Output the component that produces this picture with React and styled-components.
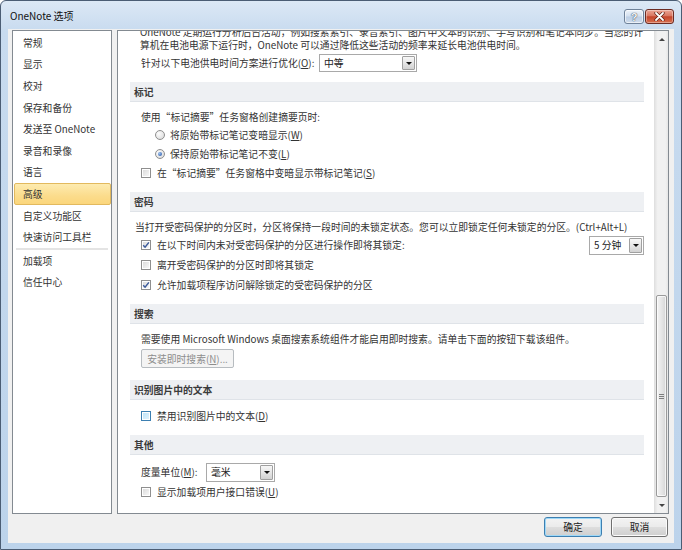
import React from "react";
import styled, { createGlobalStyle } from "styled-components";

const GlobalStyle = createGlobalStyle`
  html, body { margin: 0; padding: 0; background: #fff; }
  body {
    font-family: "Noto Sans CJK SC", "Liberation Sans", sans-serif;
    font-size: 9.8px;
    color: #333;
  }
  * { box-sizing: border-box; }
  u { text-decoration-thickness: 1px; text-underline-offset: 1px; }
`;

const navItems = [
  "常规",
  "显示",
  "校对",
  "保存和备份",
  "发送至 OneNote",
  "录音和录像",
  "语言",
  "高级",
  "自定义功能区",
  "快速访问工具栏",
  null,
  "加载项",
  "信任中心",
];

const Window = styled.div`
  width: 682px;
  height: 550px;
  display: flex;
  flex-direction: column;
  background: linear-gradient(#dce8f5, #c8dbef 30px, #bcd3eb);
  border: 1px solid #4b5d74;
  border-radius: 6px 6px 0 0;
  padding: 0 7px 6px;
`;

const TitleBar = styled.div`
  height: 28px;
  flex: none;
  display: flex;
  align-items: center;
  padding-left: 2px;
`;

const Title = styled.span`
  flex: 1;
  font-size: 10px;
  color: #111;
  margin-top: 1px;
`;

const Caption = styled.div`
  align-self: flex-start;
  margin-top: 8px;
  display: flex;
  gap: 1px;
`;

const HelpBtn = styled.span`
  width: 20px;
  height: 15px;
  border: 1px solid #6f8299;
  border-radius: 3px;
  background: linear-gradient(#eef3f9, #d3e0ef 48%, #bccee4 52%, #cfdcec);
  box-shadow: inset 0 0 0 1px rgba(255, 255, 255, 0.6);
  display: flex;
  align-items: center;
  justify-content: center;
  font-family: "Liberation Sans", sans-serif;
  font-size: 11px;
  font-weight: bold;
  color: #f4f6f9;
  text-shadow: 0 0 1px #3a4656, 0 0 1px #3a4656;
`;

const CloseBtn = styled.span`
  width: 29px;
  height: 15px;
  border: 1px solid #6c2b22;
  border-radius: 3px;
  background: linear-gradient(#eba595, #d87762 45%, #c4452c 52%, #d8704f);
  box-shadow: inset 0 0 0 1px rgba(255, 255, 255, 0.35);
  display: flex;
  align-items: center;
  justify-content: center;
`;

const Client = styled.div`
  flex: 1;
  display: flex;
  flex-direction: column;
  background: #f0f0f0;
  padding: 1px 5px 0 4px;
`;

const Body = styled.div`
  height: 484px;
  display: flex;
  gap: 5px;
`;

const Nav = styled.div`
  width: 100px;
  flex: none;
  background: #fff;
  border: 1px solid #838a91;
  padding: 1px 0 0 1px;
`;

const NavItem = styled.div`
  height: 21.6px;
  display: flex;
  align-items: center;
  padding-left: 8px;
  white-space: nowrap;
  color: #333;
  border: 1px solid ${(p) => (p.$active ? "#e2b95e" : "transparent")};
  border-radius: 2px;
  background: ${(p) =>
    p.$active ? "linear-gradient(#fdebb0, #fbdc8c 60%, #fbd67c)" : "transparent"};
`;

const NavSep = styled.div`
  height: 2px;
  margin: 0 3px 0 2px;
  background: #e4e4e4;
`;

const Panel = styled.div`
  flex: 1;
  display: flex;
  background: #fff;
  border: 1px solid #838a91;
`;

const Content = styled.div`
  flex: 1;
  overflow: hidden;
  padding: 0 10px 0 12px;
`;

const Scrolled = styled.div`
  margin-top: -5px;
`;

const ParaLine = styled.div`
  height: 12.5px;
  line-height: 12.5px;
  padding-left: 10px;
  white-space: nowrap;
`;

const Row = styled.div`
  height: ${(p) => p.$h || 19}px;
  margin-top: ${(p) => p.$mt || 0}px;
  padding-left: ${(p) => (p.$indent === undefined ? 11 : p.$indent)}px;
  display: flex;
  align-items: center;
  white-space: nowrap;
`;

const SectionHead = styled.div`
  height: 20px;
  margin-top: ${(p) => p.$gap}px;
  padding-left: 4px;
  display: flex;
  align-items: center;
  background: #eef0f3;
  border-bottom: 1px solid #dfe3e8;
  font-weight: bold;
  color: #3b3b3b;
`;

const SectionBody = styled.div`
  padding-top: ${(p) => p.$pt || 6}px;
`;

const FieldLabel = styled.span`
  width: ${(p) => p.$w}px;
  flex: none;
`;

const Box = styled.span`
  width: 10px;
  height: 10px;
  flex: none;
  display: flex;
  border: 1px solid ${(p) => (p.$hover ? "#3c7fb1" : "#8f8f8f")};
  box-shadow: inset 0 0 0 1px #fff;
  background: ${(p) =>
    p.$hover
      ? "linear-gradient(135deg, #b9e2f8, #e6f5fd)"
      : "linear-gradient(135deg, #d8d8d8, #fbfbfb)"};
`;

const Radio = styled.span`
  width: 10px;
  height: 10px;
  flex: none;
  border-radius: 50%;
  border: 1px solid #8f8f8f;
  background: radial-gradient(circle at 35% 35%, #fdfdfd, #d6d6d6);
  display: flex;
  align-items: center;
  justify-content: center;
  margin-right: 5px;
  &::after {
    content: "";
    width: 4px;
    height: 4px;
    border-radius: 50%;
    background: ${(p) =>
      p.$checked ? "radial-gradient(circle at 35% 35%, #9cc2f0, #1c4b9f)" : "transparent"};
  }
`;

const BoxLabel = styled.span`
  margin-left: 6px;
`;

const Combo = styled.div`
  width: ${(p) => p.$w}px;
  height: ${(p) => p.$h || 19}px;
  flex: none;
  margin-left: ${(p) => (p.$auto ? "auto" : "0")};
  display: flex;
  align-items: stretch;
  padding: 1px;
  background: #fff;
  border: 1px solid #a9a9a9;
`;

const ComboText = styled.span`
  flex: 1;
  display: flex;
  align-items: center;
  padding-left: 3px;
  color: #222;
`;

const ComboBtn = styled.span`
  width: 13px;
  flex: none;
  display: flex;
  align-items: center;
  justify-content: center;
  border: 1px solid #a0a0a0;
  border-radius: 1px;
  background: linear-gradient(#f7f7f7, #e6e6e6 50%, #d2d2d2);
  &::after {
    content: "";
    border-left: 3px solid transparent;
    border-right: 3px solid transparent;
    border-top: 3px solid #111;
  }
`;

const GhostButton = styled.span`
  width: 93px;
  height: 19px;
  display: flex;
  align-items: center;
  justify-content: center;
  border: 1px solid #b7bcc0;
  border-radius: 2px;
  background: #f4f4f4;
  color: #8d8d8d;
`;

const ScrollBar = styled.div`
  width: 14px;
  flex: none;
  display: flex;
  flex-direction: column;
  background: linear-gradient(to right, #e3e3e3, #f1f1f1 20%, #f1f1f1 80%, #e6e6e6);
  border-left: 1px solid #e0e0e0;
`;

const Arrow = styled.div`
  height: 16px;
  flex: none;
  display: flex;
  align-items: center;
  justify-content: center;
  &::after {
    content: "";
    border-left: 3px solid transparent;
    border-right: 3px solid transparent;
    ${(p) => (p.$down ? "border-top: 3px solid #444;" : "border-bottom: 3px solid #444;")}
  }
`;

const Track = styled.div`
  flex: 1;
  display: flex;
  flex-direction: column;
  justify-content: flex-end;
  padding: 0 1px 0 1px;
`;

const Thumb = styled.div`
  height: ${(p) => p.$h}px;
  border: 1px solid #9a9a9a;
  border-radius: 2px;
  background: linear-gradient(to right, #f4f4f4, #e6e6e6 50%, #d6d6d6);
  box-shadow: inset 0 0 0 1px rgba(255, 255, 255, 0.7);
  display: flex;
  flex-direction: column;
  align-items: center;
  justify-content: center;
  gap: 1px;
`;

const Grip = styled.span`
  width: 5px;
  height: 1px;
  background: #7d7d7d;
`;

const Footer = styled.div`
  flex: 1;
  display: flex;
  justify-content: flex-end;
  align-items: flex-start;
  gap: 9px;
  padding: 3px 1px 0 0;
`;

const DlgButton = styled.span`
  width: ${(p) => p.$w}px;
  height: 20px;
  display: flex;
  align-items: center;
  justify-content: center;
  border: 1px solid ${(p) => (p.$default ? "#3c7fb1" : "#707070")};
  border-radius: 3px;
  background: linear-gradient(#f3f3f3, #ebebeb 48%, #dddddd 52%, #cfcfcf);
  box-shadow: inset 0 0 0 1px ${(p) => (p.$default ? "#9fd8f7" : "#fbfbfb")};
  color: #222;
`;

const CheckBox = ({ checked, hover }) => (
  <Box $hover={hover}>
    {checked && (
      <svg width="8" height="8" viewBox="0 0 8 8">
        <path d="M1.2 4.2 L3.1 6.2 L6.9 1.4" fill="none" stroke="#3b5a9a" strokeWidth="1.5" />
      </svg>
    )}
  </Box>
);

const CheckRow = ({ checked, hover, h = 19, children, extra }) => (
  <Row $h={h}>
    <CheckBox checked={checked} hover={hover} />
    <BoxLabel>{children}</BoxLabel>
    {extra}
  </Row>
);

const Dropdown = ({ w, h, auto, children }) => (
  <Combo $w={w} $h={h} $auto={auto}>
    <ComboText>{children}</ComboText>
    <ComboBtn />
  </Combo>
);

const App = () => {
  return (
    <>
      <GlobalStyle />
      <Window>
        <TitleBar>
          <Title>OneNote 选项</Title>
          <Caption>
            <HelpBtn>?</HelpBtn>
            <CloseBtn>
              <svg width="11" height="9" viewBox="0 0 11 9">
                <path d="M2 1 L9 8 M9 1 L2 8" stroke="#5a1e14" strokeWidth="3.2" strokeLinecap="round" />
                <path d="M2 1 L9 8 M9 1 L2 8" stroke="#fff" strokeWidth="1.8" strokeLinecap="round" />
              </svg>
            </CloseBtn>
          </Caption>
        </TitleBar>
        <Client>
          <Body>
            <Nav>
              {navItems.map((item, i) =>
                item === null ? (
                  <NavSep key={i} />
                ) : (
                  <NavItem key={i} $active={item === "高级"}>
                    {item}
                  </NavItem>
                )
              )}
            </Nav>
            <Panel>
              <Content>
                <Scrolled>
                  <ParaLine>
                    OneNote 定期运行分析后台活动，例如搜索索引、录音索引、图片中文本的识别、手写识别和笔记本同步。当您的计
                  </ParaLine>
                  <ParaLine>
                    算机在电池电源下运行时，OneNote 可以通过降低这些活动的频率来延长电池供电时间。
                  </ParaLine>
                  <Row $h={20} $mt={2}>
                    <FieldLabel $w={178}>
                      针对以下电池供电时间方案进行优化(<u>O</u>):
                    </FieldLabel>
                    <Dropdown w={98} h={18}>中等</Dropdown>
                  </Row>

                  <SectionHead $gap={9}>标记</SectionHead>
                  <SectionBody>
                    <Row $h={17}>使用“标记摘要”任务窗格创建摘要页时:</Row>
                    <Row $indent={25}>
                      <Radio />
                      将原始带标记笔记变暗显示(<u>W</u>)
                    </Row>
                    <Row $indent={25}>
                      <Radio $checked />
                      保持原始带标记笔记不变(<u>L</u>)
                    </Row>
                    <CheckRow>
                      在“标记摘要”任务窗格中变暗显示带标记笔记(<u>S</u>)
                    </CheckRow>
                  </SectionBody>

                  <SectionHead $gap={10}>密码</SectionHead>
                  <SectionBody>
                    <Row $h={17} $indent={5}>
                      当打开受密码保护的分区时，分区将保持一段时间的未锁定状态。您可以立即锁定任何未锁定的分区。(Ctrl+Alt+L)
                    </Row>
                    <CheckRow
                      checked
                      h={20}
                      extra={<Dropdown w={55} h={19} auto>5 分钟</Dropdown>}
                    >
                      在以下时间内未对受密码保护的分区进行操作即将其锁定:
                    </CheckRow>
                    <CheckRow h={20}>离开受密码保护的分区时即将其锁定</CheckRow>
                    <CheckRow checked>允许加载项程序访问解除锁定的受密码保护的分区</CheckRow>
                  </SectionBody>

                  <SectionHead $gap={10}>搜索</SectionHead>
                  <SectionBody>
                    <Row $h={17}>
                      需要使用 Microsoft Windows 桌面搜索系统组件才能启用即时搜索。请单击下面的按钮下载该组件。
                    </Row>
                    <Row $h={19} $mt={2}>
                      <GhostButton>
                        安装即时搜索(<u>N</u>)...
                      </GhostButton>
                    </Row>
                  </SectionBody>

                  <SectionHead $gap={12}>识别图片中的文本</SectionHead>
                  <SectionBody>
                    <CheckRow hover h={20}>
                      禁用识别图片中的文本(<u>D</u>)
                    </CheckRow>
                  </SectionBody>

                  <SectionHead $gap={9}>其他</SectionHead>
                  <SectionBody $pt={7}>
                    <Row $h={20}>
                      <FieldLabel $w={65}>
                        度量单位(<u>M</u>):
                      </FieldLabel>
                      <Dropdown w={69} h={19}>毫米</Dropdown>
                    </Row>
                    <CheckRow h={20}>
                      显示加载项用户接口错误(<u>U</u>)
                    </CheckRow>
                  </SectionBody>
                </Scrolled>
              </Content>
              <ScrollBar>
                <Arrow />
                <Track>
                  <Thumb $h={202}>
                    <Grip />
                    <Grip />
                    <Grip />
                  </Thumb>
                </Track>
                <Arrow $down />
              </ScrollBar>
            </Panel>
          </Body>
          <Footer>
            <DlgButton $w={58} $default>
              确定
            </DlgButton>
            <DlgButton $w={57}>取消</DlgButton>
          </Footer>
        </Client>
      </Window>
    </>
  );
};

export default App;
